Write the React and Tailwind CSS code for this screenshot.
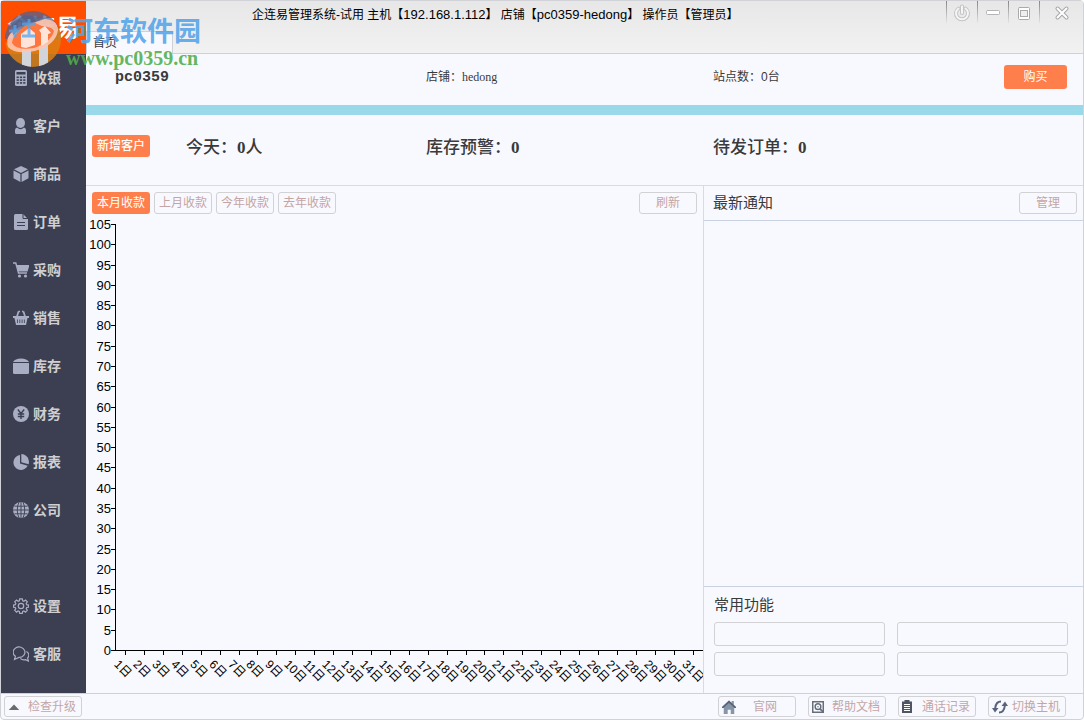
import React from "react";

const sans = "font-['Liberation_Sans','Noto_Sans_CJK_SC',sans-serif]";

function Icon({ children, className = "size-4" }) {
  return (
    <svg viewBox="0 0 16 16" className={`${className} shrink-0`} fill="currentColor" aria-hidden="true">
      {children}
    </svg>
  );
}

const bg = "#3c3f51";

const icons = {
  cashier: (
    <>
      <rect x="2" y="0" width="12" height="16" rx="1.5" />
      <rect x="3.5" y="2" width="9" height="2.5" fill={bg} />
      {[6.5, 9.3, 12.1].map((y) =>
        [3.6, 6.9, 10.2].map((x) => <rect key={`${x}-${y}`} x={x} y={y} width="2.2" height="1.6" fill={bg} />)
      )}
    </>
  ),
  customer: (
    <>
      <ellipse cx="7.5" cy="5" rx="4.5" ry="5" />
      <path d="M4 9.5Q7.5 13 11 9.5 13 10 13 12v2.500q0 1.500-1.500 1.500h-8Q2 16 2 14.500V12q0-2 2-2.500z" />
    </>
  ),
  goods: (
    <>
      <path d="M8 0l7 3.300L8 7 1 3.300z" />
      <path d="M.5 4.500L7.400 8v8L.5 12.300zM15.500 4.500L8.600 8v8l6.900-3.700z" />
    </>
  ),
  order: (
    <>
      <path d="M2.500 0H10l5 5v9.500q0 1.500-1.500 1.500h-11Q1 16 1 14.500v-13Q1 0 2.500 0z" />
      <path d="M10 0v4.500h5M4 8.500h8M4 11.500h8" stroke={bg} fill="none" />
    </>
  ),
  purchase: (
    <>
      <path d="M0 1h2.800l2.700 10H14" fill="none" stroke="currentColor" strokeWidth="1.400" />
      <path d="M3.500 3H16.500l-2 6.500H5.300z" />
      <circle cx="6.500" cy="14" r="1.600" />
      <circle cx="12.500" cy="14" r="1.600" />
    </>
  ),
  sale: (
    <>
      <path d="M0 6h16v2H0z" />
      <path d="M4 6.500L5.500 1.500M12 6.500L10.500 1.500M5.500 1.500h1.500M9 1.500h1.500" stroke="currentColor" strokeWidth="1.700" />
      <path d="M1.500 8h13L13 15H3z" />
      <path d="M4.500 9.500v3.500M6.800 9.500v3.500M9.100 9.500v3.500M11.400 9.500v3.500" stroke={bg} strokeWidth=".8" />
    </>
  ),
  stock: (
    <>
      <path d="M0 4Q2 .5 8 .5T16 4z" />
      <path d="M0 5h16v9.500q0 1.500-1.500 1.500h-13Q0 16 0 14.500z" />
    </>
  ),
  finance: (
    <>
      <circle cx="8" cy="8" r="8" />
      <path d="M4.800 3.500L8 7.500l3.200-4M8 7.500V13M4.800 8h6.400M4.800 10.500h6.400" stroke={bg} strokeWidth="1.400" fill="none" />
    </>
  ),
  report: (
    <>
      <path d="M7 1v8.500l7.700 2.200A7.500 7.500 0 1 1 7 1z" />
      <path d="M8.300 0A8 8 0 0 1 15.600 10.300L8.300 8.300z" />
    </>
  ),
  company: (
    <>
      <circle cx="8" cy="8" r="8" />
      <path d="M8 0v16M0 8h16M1.500 4.200h13M1.500 11.800h13M6 0Q2.500 8 6 16M10 0q3.500 8 0 16" stroke={bg} fill="none" strokeWidth=".9" />
    </>
  ),
  settings: (
    <g fill="none" stroke="currentColor" strokeWidth="1.200">
      <path d="M6.700.8h2.600l.4 1.900 1.200.5 1.600-1.100 1.800 1.800-1.100 1.600.5 1.200 1.900.4v2l-1.900.4-.5 1.200 1.100 1.600-1.800 1.800-1.600-1.100-1.200.5-.4 1.900H6.700l-.4-1.900-1.200-.5-1.600 1.100-1.800-1.800 1.100-1.600-.5-1.200L.4 9.100v-2l1.900-.4.5-1.200-1.100-1.600 1.800-1.800 1.600 1.100 1.200-.5z" />
      <circle cx="8" cy="8" r="2.700" />
    </g>
  ),
  service: (
    <g fill="none" stroke="currentColor" strokeWidth="1.200">
      <path d="M1.500 13.500l.9-3.200A5.900 5.200 0 1 1 6 11.400z" />
      <path d="M13.400 5.500a4 4 0 0 1 1.200 6.500l.8 3-2.900-1.300q-3 .8-5.200-1.300" />
    </g>
  ),
};

const menu = [
  ["cashier", "收银"],
  ["customer", "客户"],
  ["goods", "商品"],
  ["order", "订单"],
  ["purchase", "采购"],
  ["sale", "销售"],
  ["stock", "库存"],
  ["finance", "财务"],
  ["report", "报表"],
  ["company", "公司"],
];

function MenuItem({ icon, label }) {
  return (
    <button type="button" className="flex h-12 w-full shrink-0 items-center gap-1 pl-3 text-[#a9aec4]">
      <Icon>{icons[icon]}</Icon>
      <span className="text-[14px] leading-5 font-bold text-[#cfcfd1]">{label}</span>
    </button>
  );
}

function Outline({ children, className = "" }) {
  return (
    <button
      type="button"
      className={`flex h-[22px] w-[58px] items-center justify-center rounded-[3px] border border-[#d2d2d4] text-[12px] whitespace-nowrap text-[#c4a5a5] ${className}`}
    >
      {children}
    </button>
  );
}

function Solid({ children, className = "h-[22px] w-[58px]" }) {
  return (
    <button
      type="button"
      className={`flex items-center justify-center rounded-[3px] bg-[#ff7f4c] text-[12px] whitespace-nowrap text-white ${className}`}
    >
      {children}
    </button>
  );
}

function FooterButton({ icon, label, spread = false }) {
  return (
    <button
      type="button"
      className="flex h-[21px] w-[78px] items-center rounded-[3px] border border-[#d2d2d4] pr-[5px] pl-[3px] text-[12px] whitespace-nowrap text-[#c4a5a5]"
    >
      {icon}
      <span className={spread ? "flex-1 pl-1 text-center" : "flex-1 text-right"}>{label}</span>
    </button>
  );
}

function Chart() {
  const base = 436;
  const values = Array.from({ length: 22 }, (_, i) => i * 5);
  const days = Array.from({ length: 31 }, (_, i) => i + 1);
  const yOf = (v) => Math.round(base - (v * 426) / 105) + 0.5;
  const xOf = (d) => Math.round(39 + (d - 1) * 18.92) + 0.5;
  return (
    <svg
      viewBox="0 0 617 478"
      preserveAspectRatio="xMinYMin meet"
      className="min-h-0 w-full flex-1"
      role="img"
      aria-label="本月收款"
    >
      <path d="M29.500 10V436.500H617" fill="none" stroke="#000" />
      {values.map((v) => (
        <g key={v}>
          <path d={`M25 ${yOf(v)}H30`} stroke="#000" />
          <text x="25" y={yOf(v) + 4.5} textAnchor="end" className="text-[13px]">
            {v}
          </text>
        </g>
      ))}
      {days.map((d) => (
        <g key={d}>
          <path d={`M${xOf(d)} 436V441`} stroke="#000" />
          <text transform={`translate(${xOf(d) - 12} 451) rotate(45)`} className="text-[12px]">
            {d}日
          </text>
        </g>
      ))}
    </svg>
  );
}

function Separator() {
  return <span className="h-[22px] w-px bg-gradient-to-b from-[#868686] to-[#e4e4e4]" />;
}

function WindowButton({ label, children, className = "w-[30px]" }) {
  return (
    <button type="button" aria-label={label} className={`flex h-6 items-center justify-center ${className}`}>
      <svg viewBox="0 0 18 18" className="size-[18px]" fill="none" strokeLinecap="round">
        {children}
      </svg>
    </button>
  );
}

function Watermark() {
  return (
    <div className="pointer-events-none absolute top-[10px] left-1 flex items-start gap-[5px]">
      <svg viewBox="0 0 56 56" className="size-14" aria-hidden="true">
        <defs>
          <clipPath id="disc">
            <circle cx="28" cy="28" r="28" />
          </clipPath>
        </defs>
        <g clipPath="url(#disc)">
          <path d="M0 0h56v28H0z" fill="#4d6391" fillOpacity=".72" />
          <path d="M0 31Q28 46 56 14V56H0z" fill="#d98014" fillOpacity=".85" />
          <path d="M17 36h9v20h-9zM34 33h9v23h-9z" fill="#d2d4dc" />
          <path d="M3 36Q-1 24 14 16L40 8Q53 9 53 19 51 34 30 40 10 44 3 36z" fill="#ffc7af" fillOpacity=".9" />
          <path d="M7 32Q8 20 28 11l9 4q11 1 12 5-3 11-20 17-17 3-22-5z" fill="#ff6424" fillOpacity=".8" />
          <path d="M16 23l8-6 6 5v12l-9 3-5-1zM34 19l6-4 6 7-3 1v8l-7 4V22z" fill="#ffe4da" />
          <path d="M6 12L20 4l20 3-20 8L8 24z" fill="#4d6391" fillOpacity=".7" />
          <path d="M4 20h11M10 14v12M17 13h14M24 8v18M17 25h14" stroke="#52a7ee" strokeOpacity=".75" strokeWidth="3" />
        </g>
      </svg>
      <div className="flex flex-col">
        <span className="text-[27px] leading-[37px] font-bold text-[#55a4ea]/90 font-['Noto_Sans_CJK_SC',sans-serif]">
          河东软件园
        </span>
        <span className="text-[20px] leading-5 font-bold text-[#4fae4a]/90 font-['Liberation_Serif',serif]">
          www.pc0359.cn
        </span>
      </div>
    </div>
  );
}

function Count({ label, unit = "" }) {
  return (
    <span className="pt-1">
      {label}：<span className="font-bold font-['Liberation_Serif',serif]">0</span>
      {unit}
    </span>
  );
}

export default function App() {
  return (
    <div
      className={`relative flex min-h-screen w-full flex-col rounded-sm border border-[#d0d2d8] bg-[#f8f9ff] text-[12px] text-[#3a3a3a] ${sans}`}
    >
      <header className="flex h-[53px] shrink-0 bg-gradient-to-b from-[#e7e7e7] to-[#f2f2f2]">
        <div className="flex w-[85px] shrink-0 items-center justify-center bg-[#ff4e00] text-[24px] font-bold text-white">
          企连易
        </div>
        <div className="flex min-w-0 flex-1 flex-col justify-between border-b border-[#cfd1d8]">
          <h1 className="pl-[166px] text-[12px] leading-[28px] whitespace-nowrap text-black">
            企连易管理系统-试用 主机【<span className="text-[13px]">192.168.1.112</span>】 店铺【
            <span className="text-[13px]">pc0359-hedong</span>】 操作员【管理员】
          </h1>
          <nav className="-mb-px flex">
            <a
              href="#home"
              className="flex h-[23px] w-[87px] items-center border border-b-0 border-[#cfd1d8] bg-[#f8f9ff] pl-1.5 text-[12px]"
            >
              首页
            </a>
          </nav>
        </div>
        <div className="flex shrink-0 items-start border-b border-[#cfd1d8]">
          <Separator />
          <WindowButton label="电源">
            <path d="M5.500 4.500a6 6 0 1 0 7 0M9 2.500V9" stroke="#c4c4c4" strokeWidth="4" />
            <path d="M5.500 4.500a6 6 0 1 0 7 0M9 2.500V9" stroke="#f6f6f6" strokeWidth="2" />
          </WindowButton>
          <Separator />
          <WindowButton label="最小化">
            <rect x="2.500" y="6.500" width="13" height="4" rx="1" fill="#fff" stroke="#b4b4b4" />
          </WindowButton>
          <Separator />
          <WindowButton label="最大化">
            <rect x="3.500" y="3.500" width="11" height="12" rx="1" fill="#fff" stroke="#aaa" />
            <rect x="5.500" y="6.500" width="7" height="6" fill="#eee" stroke="#aaa" />
          </WindowButton>
          <Separator />
          <WindowButton label="关闭" className="w-[43px]">
            <path d="M4.500 4.500l9 9M13.500 4.500l-9 9" stroke="#a8a8a8" strokeWidth="4" />
            <path d="M4.500 4.500l9 9M13.500 4.500l-9 9" stroke="#fff" strokeWidth="2" />
          </WindowButton>
        </div>
      </header>

      <div className="flex flex-1">
        <aside className="flex w-[85px] shrink-0 flex-col justify-between bg-[#3c3f51] pb-[15px]">
          <nav>
            {menu.map(([icon, label]) => (
              <MenuItem key={icon} icon={icon} label={label} />
            ))}
          </nav>
          <nav>
            <MenuItem icon="settings" label="设置" />
            <MenuItem icon="service" label="客服" />
          </nav>
        </aside>

        <main className="flex min-w-0 flex-1 flex-col">
          <section className="grid h-[51px] shrink-0 grid-cols-[340fr_287fr_370fr] items-center pb-[5px]">
            <strong className="pt-0.5 pl-[29px] text-[15px] leading-5 font-['Liberation_Mono',monospace]">pc0359</strong>
            <span>
              店铺：<span className="font-['Liberation_Serif',serif]">hedong</span>
            </span>
            <div className="flex items-center justify-between pr-4">
              <span>站点数：0台</span>
              <Solid className="h-6 w-[63px]">购买</Solid>
            </div>
          </section>
          <div className="h-[10px] shrink-0 bg-[#99d9ea]" />
          <section className="grid h-[71px] shrink-0 grid-cols-[340fr_287fr_370fr] items-center border-b border-[#d9dae3] pb-2 text-[17px] font-medium">
            <div className="flex items-center gap-9 pl-1.5">
              <Solid>新增客户</Solid>
              <Count label="今天" unit="人" />
            </div>
            <Count label="库存预警" />
            <Count label="待发订单" />
          </section>

          <div className="grid flex-1 grid-cols-[617fr_380fr]">
            <section className="flex min-w-0 flex-col">
              <div className="flex items-center gap-1 pt-1.5 pr-1.5 pl-1.5">
                <Solid>本月收款</Solid>
                <Outline>上月收款</Outline>
                <Outline>今年收款</Outline>
                <Outline>去年收款</Outline>
                <Outline className="ml-auto">刷新</Outline>
              </div>
              <Chart />
            </section>
            <section className="flex min-w-0 flex-col border-l border-[#d9dae3]">
              <div className="flex h-[35px] items-center justify-between border-b border-[#c9d2e0] pr-1.5 pl-[9px]">
                <h2 className="text-[15px]">最新通知</h2>
                <Outline>管理</Outline>
              </div>
              <div className="flex-1" />
              <div className="border-t border-[#c9d2e0] pr-[15px] pb-[17px] pl-[10px]">
                <h2 className="text-[15px] leading-[35px]">常用功能</h2>
                <div className="grid grid-cols-2 gap-x-3 gap-y-1.5">
                  {[1, 2, 3, 4].map((n) => (
                    <button
                      key={n}
                      type="button"
                      aria-label={`常用功能 ${n}`}
                      className="h-6 rounded-[3px] border border-[#d2d2d4]"
                    />
                  ))}
                </div>
              </div>
            </section>
          </div>
        </main>
      </div>

      <footer className="flex h-[26px] shrink-0 items-center justify-between border-t border-[#cfd1d8] pr-[17px] pl-[3px]">
        <FooterButton
          label="检查升级"
          icon={
            <Icon className="size-3">
              <path d="M1 12L8 4.500 15 12z" fill="#6b6b6b" />
            </Icon>
          }
        />
        <div className="flex gap-3">
          <FooterButton
            label="官网"
            spread
            icon={
              <Icon className="size-[14px]">
                <path d="M0 8L8 .5l3 2.800V1h2.500v4.600L16 8v1h-2v7h-4v-5H6.500v5H2V9H0z" fill="#8795a8" />
                <path d="M0 8L8 .5 16 8v1h-1.500L8 3.500 1.500 9H0z" fill="#5a6478" />
              </Icon>
            }
          />
          <FooterButton
            label="帮助文档"
            icon={
              <Icon className="size-3">
                <path d="M0 0h16v16H0z" fill="#666e7c" />
                <path d="M2 2h12v12H2z" fill="#fff" />
                <circle cx="8" cy="7.500" r="3.800" fill="#fff" stroke="#666e7c" strokeWidth="2" />
                <circle cx="8" cy="7.500" r="1" fill="#666e7c" />
                <path d="M10.500 10.500L15 14.500" stroke="#666e7c" strokeWidth="2.500" />
              </Icon>
            }
          />
          <FooterButton
            label="通话记录"
            icon={
              <svg viewBox="0 0 10 13" className="h-[13px] w-[10px] shrink-0" aria-hidden="true">
                <path d="M0 1.500h2.500V0h5v1.500H10V13H0z" fill="#4f5562" />
                <path d="M2 4.500h6M2 6.500h6M2 8.500h6M2 10.500h6" stroke="#fff" />
              </svg>
            }
          />
          <FooterButton
            label="切换主机"
            icon={
              <Icon>
                <g fill="none" stroke="#5a6478" strokeWidth="2">
                  <path d="M9 2.500Q4 2.500 3.200 9" />
                  <path d="M7 13.500Q12 13.500 12.800 7" />
                </g>
                <path d="M0 9h6.500L3 13.500zM16 7H9.500L13 2.500z" fill="#5a6478" />
              </Icon>
            }
          />
        </div>
      </footer>

      <Watermark />
    </div>
  );
}
